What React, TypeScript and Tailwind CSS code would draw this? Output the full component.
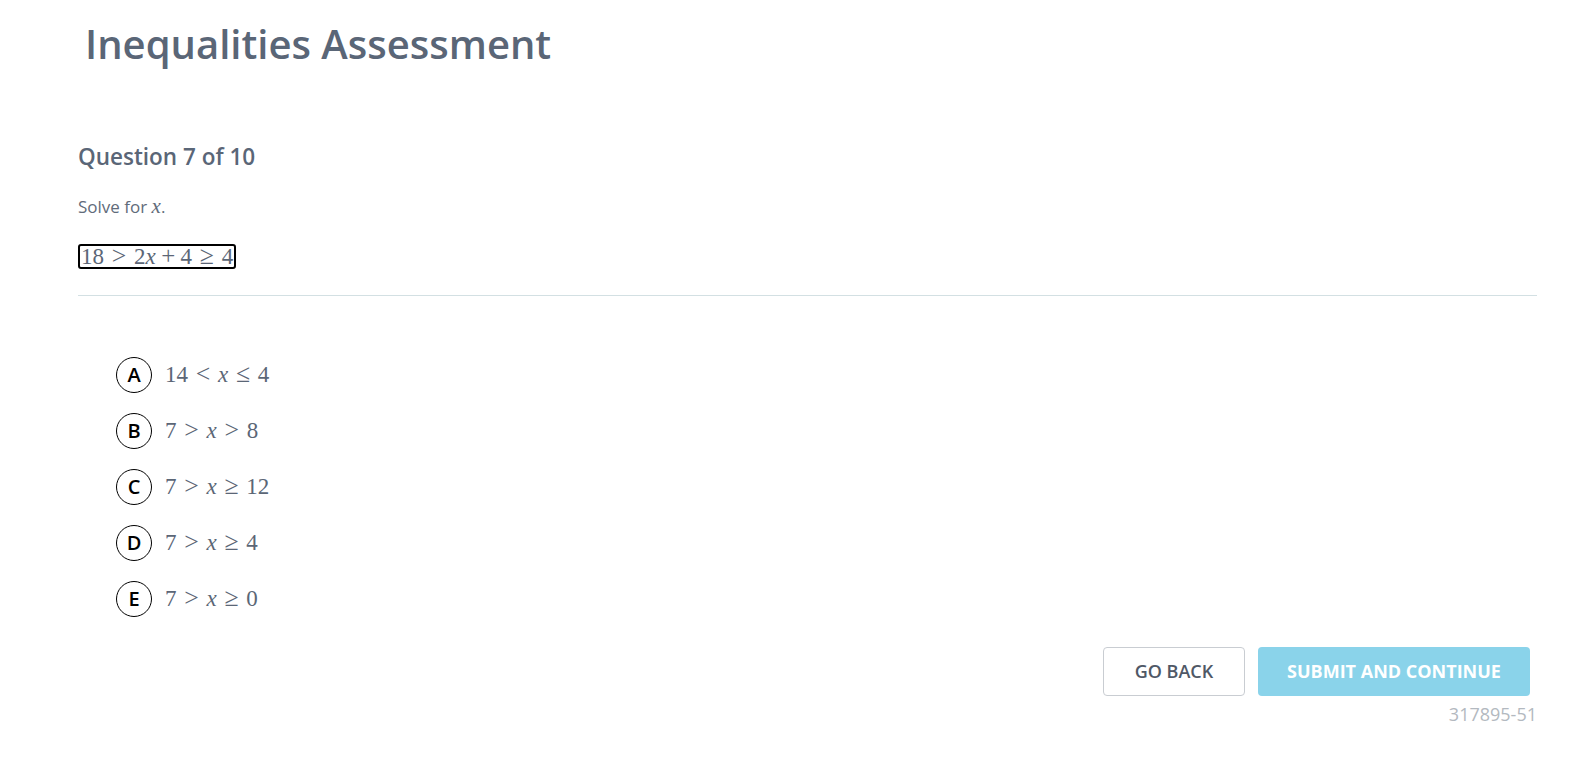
import React from "react";

// relation / binary operator with KaTeX-like spacing
const Op = ({ c }: { c: string }) => <span className="mx-[0.3em] text-[1.12em] leading-[0]">{c}</span>;
const Bin = ({ c }: { c: string }) => <span className="mx-[0.22em] text-[1.08em] leading-[0]">{c}</span>;
const X = () => <i>x</i>;

const OPTIONS: { letter: string; expr: React.ReactNode }[] = [
  { letter: "A", expr: <>14<Op c="<" /><X /><Op c="≤" />4</> },
  { letter: "B", expr: <>7<Op c=">" /><X /><Op c=">" />8</> },
  { letter: "C", expr: <>7<Op c=">" /><X /><Op c="≥" />12</> },
  { letter: "D", expr: <>7<Op c=">" /><X /><Op c="≥" />4</> },
  { letter: "E", expr: <>7<Op c=">" /><X /><Op c="≥" />0</> },
];

const math = "font-['Liberation_Serif','DejaVu_Serif',serif]";

export default function App() {
  return (
    <div className="min-h-[758px] w-full bg-white font-['Open_Sans',sans-serif] text-[#5b6676]">
      <div className="pl-[78px] pr-[43px]">
        <h1 className="pl-[7px] pt-[18px] text-[40px] font-semibold leading-[52px] text-[#5a6677]">
          Inequalities Assessment
        </h1>

        <h2 className="mt-[72px] text-[22.5px] font-semibold leading-[30px] text-[#5a6677]">
          Question 7 of 10
        </h2>
        <p className="mt-[22px] text-[17px] leading-[24px] text-[#616b7a]">
          Solve for <i className={`${math} text-[21px]`}>x</i>.
        </p>
        <div className="mt-[25px]">
          <span className={`${math} inline-block rounded-[3px] border-2 border-black px-[1px] text-[23px] leading-[21px] text-[#5b6676]`}>
            18<Op c=">" />2<X /><Bin c="+" />4<Op c="≥" />4
          </span>
        </div>

        <div className="mt-[25px] h-px bg-[#d3e0e3]" />

        <ul className="mt-[61px] flex flex-col gap-[20px] pl-[38px]">
          {OPTIONS.map((o) => (
            <li key={o.letter} className="flex h-[36px] items-center gap-[13px]">
              <span className="flex h-[36px] w-[36px] items-center justify-center rounded-full border-[1.5px] border-black text-[20px] font-semibold text-black">
                {o.letter}
              </span>
              <span className={`${math} text-[23px] leading-[30px] text-[#5b6676]`}>{o.expr}</span>
            </li>
          ))}
        </ul>

        <div className="mt-[30px] flex justify-end gap-[13px] pr-[7px]">
          <button className="h-[49px] w-[142px] rounded-[4px] border border-[#c9cdd2] bg-white text-[18px] font-semibold text-[#4f5866]">
            GO BACK
          </button>
          <button className="h-[49px] w-[272px] rounded-[4px] bg-[#8ad3ea] text-[18px] font-bold text-white">
            SUBMIT AND CONTINUE
          </button>
        </div>
        <p className="mt-[6px] text-right text-[18px] leading-[24px] text-[#b3b9c0]">317895-51</p>
      </div>
    </div>
  );
}
